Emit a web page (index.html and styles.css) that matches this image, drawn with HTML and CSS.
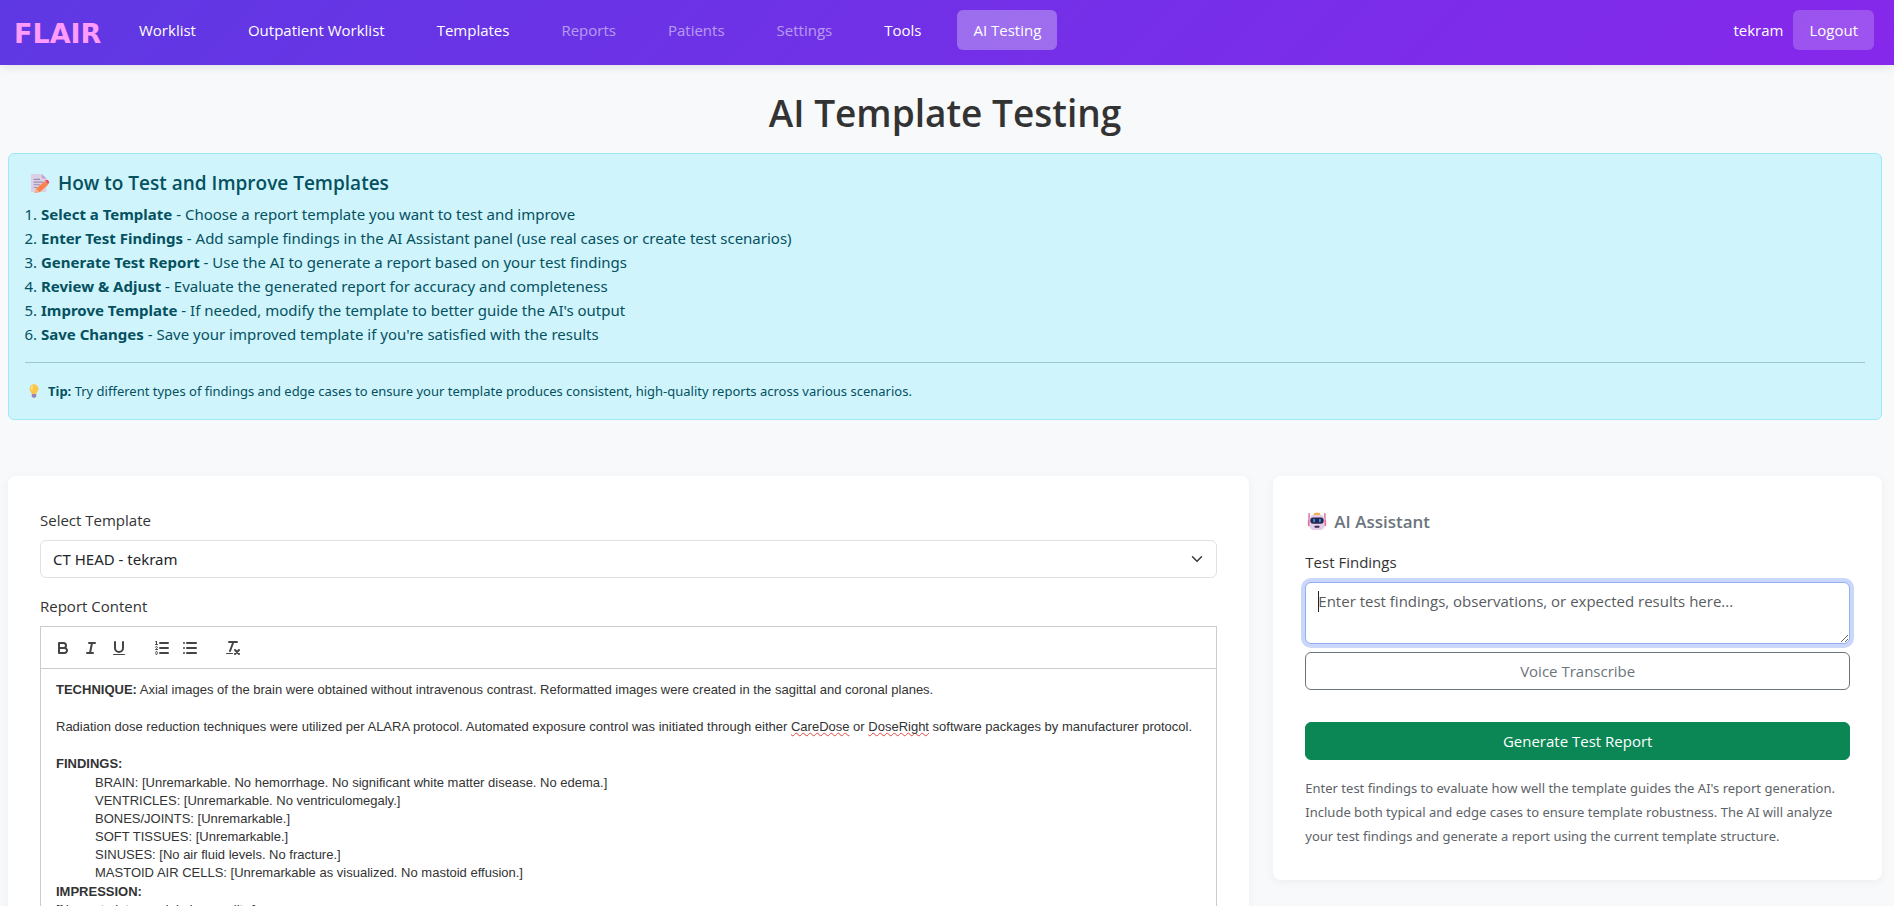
FILE: index.html
```html
<!DOCTYPE html>
<html lang="en">
<head>
<meta charset="utf-8">
<meta name="viewport" content="width=device-width, initial-scale=1">
<title>AI Template Testing</title>
<link rel="stylesheet" href="styles.css">
</head>
<body>
<header class="topbar">
  <a class="brand" href="#">FLAIR</a>
  <nav class="nav">
    <a class="nav-link" href="#">Worklist</a>
    <a class="nav-link" href="#">Outpatient Worklist</a>
    <a class="nav-link" href="#">Templates</a>
    <a class="nav-link disabled" href="#" aria-disabled="true">Reports</a>
    <a class="nav-link disabled" href="#" aria-disabled="true">Patients</a>
    <a class="nav-link disabled" href="#" aria-disabled="true">Settings</a>
    <a class="nav-link" href="#">Tools</a>
    <a class="nav-link active" href="#" aria-current="page">AI Testing</a>
  </nav>
  <div class="account">
    <span>tekram</span>
    <button class="logout" type="button">Logout</button>
  </div>
</header>

<main class="page">
  <h1 class="title">AI Template Testing</h1>

  <section class="notice">
    <h2 class="notice-title">
      <svg class="emoji" viewBox="2 1 22 22" aria-hidden="true">
        <path fill="#dccfe6" d="M4 2h11l5 5v14a1 1 0 0 1-1 1H4a1 1 0 0 1-1-1V3a1 1 0 0 1 1-1z"/>
        <path fill="#b9a6cf" d="M15 2l5 5h-4a1 1 0 0 1-1-1z"/>
        <path stroke="#9a8fb0" stroke-width="1.2" d="M6 8h7M6 11h10M6 14h7M6 17h4"/>
        <path fill="#f9834a" d="M18 10l4 4-9 8-6 1 2-5z"/>
        <path fill="#e8505f" d="M18.500 9.500l1.500-1q1-.5 2 .5l1 1.500q.6 1-.5 2l-1 1z"/>
        <path fill="#f5b183" d="M9 18l3 3.500-5 1.500z"/>
      </svg>
      How to Test and Improve Templates
    </h2>
    <ol class="steps">
      <li><strong>Select a Template</strong> - Choose a report template you want to test and improve</li>
      <li><strong>Enter Test Findings</strong> - Add sample findings in the AI Assistant panel (use real cases or create test scenarios)</li>
      <li><strong>Generate Test Report</strong> - Use the AI to generate a report based on your test findings</li>
      <li><strong>Review &amp; Adjust</strong> - Evaluate the generated report for accuracy and completeness</li>
      <li><strong>Improve Template</strong> - If needed, modify the template to better guide the AI's output</li>
      <li><strong>Save Changes</strong> - Save your improved template if you're satisfied with the results</li>
    </ol>
    <hr class="rule">
    <p class="tip">
      <svg class="emoji-small" viewBox="0 0 18 18" aria-hidden="true">
        <path fill="#fbc548" d="M9 1.500a5 5 0 0 1 5 5c0 2.400-2 3.500-2.500 6h-5C6 10 4 8.900 4 6.500a5 5 0 0 1 5-5z"/>
        <path fill="#ffe58b" d="M8 3a3 3 0 0 0-2.500 3.500q.5 1.500 1.500 2z"/>
        <path fill="#9a84b5" d="M6.500 12.500h5v2.500q-1 2-2.500 2t-2.500-2z"/>
      </svg>
      <span><strong>Tip:</strong> Try different types of findings and edge cases to ensure your template produces consistent, high-quality reports across various scenarios.</span>
    </p>
  </section>

  <div class="columns">
    <section class="card editor-card">
      <label class="label" for="template">Select Template</label>
      <div class="select-wrap">
        <select class="select" id="template"><option>CT HEAD - tekram</option></select>
        <svg class="chevron" viewBox="0 0 16 16" aria-hidden="true"><path d="m2 5 6 6 6-6"/></svg>
      </div>
      <span class="label" id="content-label">Report Content</span>
      <div class="toolbar" role="toolbar" aria-label="Formatting">
        <div class="tools">
          <button class="tool" type="button" aria-label="Bold"><svg viewBox="0 0 18 18"><path class="s" d="M5,4H9.500A2.500,2.500,0,0,1,12,6.500v0A2.500,2.500,0,0,1,9.500,9H5V4Z"/><path class="s" d="M5,9h5.500A2.500,2.500,0,0,1,13,11.500v0A2.500,2.500,0,0,1,10.500,14H5V9Z"/></svg></button>
          <button class="tool" type="button" aria-label="Italic"><svg viewBox="0 0 18 18"><path class="s" d="M7 4h6M5 14h6M8 14 10 4"/></svg></button>
          <button class="tool" type="button" aria-label="Underline"><svg viewBox="0 0 18 18"><path class="s" d="M5,3V9a4.012,4.012,0,0,0,4,4H9a4.012,4.012,0,0,0,4-4V3"/><rect class="f" x="3" y="15" width="12" height="1" rx=".5"/></svg></button>
        </div>
        <div class="tools">
          <button class="tool" type="button" aria-label="Numbered list"><svg viewBox="0 0 18 18"><path class="s" d="M7 4h8M7 9h8M7 14h8"/><path class="t" d="M2.500 5.500h2"/><path class="f" d="M3.500,6A0.500,0.500,0,0,1,3,5.500V3.085l-0.276.138A0.500,0.500,0,0,1,2.053,3c-0.124-.247-0.023-0.324.224-0.447l1-.5A0.500,0.500,0,0,1,4,2.500v3A0.500,0.500,0,0,1,3.500,6Z"/><path class="t" d="M4.500,10.500h-2c0-.234,1.850-1.076,1.850-2.234A0.959,0.959,0,0,0,2.500,8.156"/><path class="t" d="M2.500,14.846a0.959,0.959,0,0,0,1.850-.109A0.700,0.700,0,0,0,3.750,14a0.688,0.688,0,0,0,.6-0.736,0.959,0.959,0,0,0-1.850-.109"/></svg></button>
          <button class="tool" type="button" aria-label="Bulleted list"><svg viewBox="0 0 18 18"><path class="s" d="M6 4h9M6 9h9M6 14h9M3 4h.01M3 9h.01M3 14h.01"/></svg></button>
        </div>
        <div class="tools">
          <button class="tool" type="button" aria-label="Clear formatting"><svg viewBox="0 0 18 18"><path class="s" d="M5 3h8M6 12 9.350 3M11 11l4 4M15 11l-4 4"/><rect class="f" x="2" y="14" width="7" height="1" rx=".5"/></svg></button>
        </div>
      </div>
      <div class="editor" contenteditable="true" spellcheck="false" role="textbox" aria-multiline="true" aria-labelledby="content-label">
        <p class="para"><strong>TECHNIQUE:</strong> Axial images of the brain were obtained without intravenous contrast. Reformatted images were created in the sagittal and coronal planes.</p>
        <p class="para">Radiation dose reduction techniques were utilized per ALARA protocol. Automated exposure control was initiated through either <span class="typo">CareDose</span> or <span class="typo">DoseRight</span> software packages by manufacturer protocol.</p>
        <p><strong>FINDINGS:</strong></p>
        <ul class="findings">
          <li>BRAIN: [Unremarkable. No hemorrhage. No significant white matter disease. No edema.]</li>
          <li>VENTRICLES: [Unremarkable. No ventriculomegaly.]</li>
          <li>BONES/JOINTS: [Unremarkable.]</li>
          <li>SOFT TISSUES: [Unremarkable.]</li>
          <li>SINUSES: [No air fluid levels. No fracture.]</li>
          <li>MASTOID AIR CELLS: [Unremarkable as visualized. No mastoid effusion.]</li>
        </ul>
        <p><strong>IMPRESSION:</strong></p>
        <p>[No acute intracranial abnormality.]</p>
      </div>
    </section>

    <aside class="card">
      <h2 class="assistant-title">
        <svg class="emoji" viewBox="0 1 24 24" aria-hidden="true">
          <path stroke="#d0628f" stroke-width="1.600" stroke-linecap="round" d="M2.500 3v9M21.500 3v9"/>
          <rect x="1" y="10" width="4" height="8" rx="1.500" fill="#e8709c"/>
          <rect x="19" y="10" width="4" height="8" rx="1.500" fill="#e8709c"/>
          <path fill="#f2b04c" d="M8 4q0-2 2-2h4q2 0 2 2v2H8z"/>
          <rect x="3" y="4.500" width="18" height="18" rx="5" fill="#e3cdea"/>
          <rect x="4" y="7.500" width="16" height="7.500" rx="3.500" fill="#2a2450"/>
          <rect x="7.500" y="9" width="2" height="4.500" rx="1" fill="#35a6e8"/>
          <rect x="14.500" y="9" width="2" height="4.500" rx="1" fill="#35a6e8"/>
          <rect x="9" y="17.500" width="6" height="2.500" rx="1" fill="#3a2a55"/>
        </svg>
        AI Assistant
      </h2>
      <label class="label" for="findings">Test Findings</label>
      <div class="field">
        <textarea class="textarea" id="findings" rows="2" placeholder="Enter test findings, observations, or expected results here..." autofocus></textarea>
      </div>
      <button class="btn btn-outline" type="button">Voice Transcribe</button>
      <button class="btn btn-success" type="button">Generate Test Report</button>
      <p class="help">Enter test findings to evaluate how well the template guides the AI's report generation. Include both typical and edge cases to ensure template robustness. The AI will analyze your test findings and generate a report using the current template structure.</p>
    </aside>
  </div>
</main>
</body>
</html>
```

FILE: styles.css
```css
*,
*::before,
*::after {
  box-sizing: border-box;
}

html {
  overflow: hidden;
}

body {
  margin: 0;
  background: #f8f9fa;
  color: #333;
  font: 15px/24px "Open Sans", "Noto Sans", sans-serif;
}

h1, h2, p, ol, ul {
  margin: 0;
  padding: 0;
}

a {
  color: inherit;
  text-decoration: none;
}

button, select, textarea {
  font: inherit;
}

/* Top bar */
.topbar {
  display: flex;
  align-items: flex-start;
  height: 65px;
  padding: 10px 20px 0 14px;
  background: linear-gradient(135deg, #5e38e3, #8628eb);
  box-shadow: 0 2px 10px rgba(0, 0, 0, 0.1);
  color: #fff;
}

.brand {
  width: 109px;
  color: #ff9bfa;
  font: 700 27px/48px "DejaVu Sans", sans-serif;
}

.nav {
  display: flex;
  gap: 20px;
}

.nav-link {
  padding: 8px 16px;
  border-radius: 6px;
}

.nav-link.active {
  background: rgba(255, 255, 255, 0.3);
}

.nav-link.disabled {
  opacity: 0.5;
}

.account {
  display: flex;
  align-items: center;
  gap: 10px;
  margin-left: auto;
}

.logout {
  padding: 8px 16px;
  border: 0;
  border-radius: 6px;
  background: rgba(255, 255, 255, 0.2);
  color: #fff;
}

/* Page */
.page {
  padding: 20px 12px 24px 8px;
}

.title {
  margin-bottom: 12px;
  font-size: 37px;
  font-weight: 600;
  line-height: 56px;
  text-align: center;
}

.notice {
  margin-bottom: 56px;
  padding: 16px;
  border: 1px solid #9eeaf9;
  border-radius: 6px;
  background: #cff4fc;
  color: #055160;
}

.notice-title {
  display: flex;
  align-items: center;
  gap: 8px;
  padding: 1px 0 7px 5px;
  font-size: 19px;
  font-weight: 600;
  line-height: 24px;
}

.emoji {
  width: 20px;
  height: 20px;
  fill: none;
}

.emoji-small {
  width: 16px;
  height: 16px;
}

.steps {
  padding-left: 16px;
  font-family: "Noto Sans", sans-serif;
}

.rule {
  height: 1px;
  margin: 16px 0;
  border: 0;
  background: #9cc8d2;
}

.tip {
  display: flex;
  align-items: center;
  gap: 6px;
  padding-left: 1px;
  font-family: "Noto Sans", sans-serif;
  font-size: 13px;
}

.columns {
  display: grid;
  grid-template-columns: repeat(12, 1fr);
  gap: 24px;
  align-items: start;
}

.card {
  display: flex;
  flex-direction: column;
  grid-column: span 4;
  padding: 32px;
  border-radius: 8px;
  background: #fff;
  box-shadow: 0 2px 10px rgba(0, 0, 0, 0.05);
}

.editor-card {
  grid-column: span 8;
}

.label {
  margin-bottom: 8px;
}

.select-wrap {
  display: grid;
  align-items: center;
  margin-bottom: 16px;
}

.select {
  grid-area: 1 / 1;
  width: 100%;
  height: 38px;
  padding: 0 36px 0 12px;
  border: 1px solid #dee2e6;
  border-radius: 6px;
  background: #fff;
  color: #212529;
  font-family: "Noto Sans", sans-serif;
  appearance: none;
}

.chevron {
  grid-area: 1 / 1;
  justify-self: end;
  width: 12px;
  height: 12px;
  margin-right: 14px;
  fill: none;
  stroke: #343a40;
  stroke-width: 2;
  stroke-linecap: round;
  stroke-linejoin: round;
  pointer-events: none;
}

/* Rich text editor */
.toolbar {
  display: flex;
  gap: 15px;
  padding: 9px 8px 8px;
  border: 1px solid #ccc;
}

.tools {
  display: flex;
}

.tool {
  width: 28px;
  height: 24px;
  padding: 3px 5px;
  border: 0;
  background: none;
}

.tool svg {
  display: block;
  width: 18px;
  height: 18px;
}

.s, .t {
  fill: none;
  stroke: #444;
  stroke-width: 2;
  stroke-linecap: round;
  stroke-linejoin: round;
}

.t {
  stroke-width: 1;
}

.f {
  fill: #444;
}

.editor {
  min-height: 300px;
  padding: 12px 15px;
  border: 1px solid #ccc;
  border-top: 0;
  font: 13px/18px "Liberation Sans", Arial, sans-serif;
  outline: 0;
}

.para {
  margin-bottom: 19px;
}

.findings {
  margin: 1px 0;
  padding-left: 39px;
  list-style: none;
}

.typo {
  text-decoration: underline wavy #e0463c 1px;
  text-decoration-skip-ink: none;
}

/* Assistant panel */
.assistant-title {
  display: flex;
  align-items: center;
  gap: 7px;
  margin-bottom: 15px;
  padding: 1px 0 0 2px;
  color: #6c757d;
  font-size: 17px;
  font-weight: 600;
  line-height: 26px;
}

.field {
  display: grid;
  position: relative;
  margin-bottom: 8px;
}

/* Text cursor at the start of the empty field */
.field::before {
  content: "";
  position: absolute;
  top: 9px;
  left: 13px;
  width: 1px;
  height: 21px;
  background: #212529;
}

.textarea {
  min-height: 62px;
  padding: 6px 12px;
  border: 1px solid #92aef0;
  border-radius: 6px;
  box-shadow: 0 0 0 4px #cad7fb;
  color: #212529;
  caret-color: transparent;
  outline: 0;
  resize: vertical;
}

.textarea::placeholder {
  color: #595c5f;
}

.btn {
  height: 38px;
  border: 1px solid;
  border-radius: 6px;
}

.btn-outline {
  margin-bottom: 32px;
  border-color: #6c757d;
  background: #fff;
  color: #6c757d;
}

.btn-success {
  margin-bottom: 16px;
  border-color: #0a8754;
  background: #0a8754;
  color: #fff;
}

.help {
  color: #5d6368;
  font-family: "Noto Sans", sans-serif;
  font-size: 13px;
}
```
